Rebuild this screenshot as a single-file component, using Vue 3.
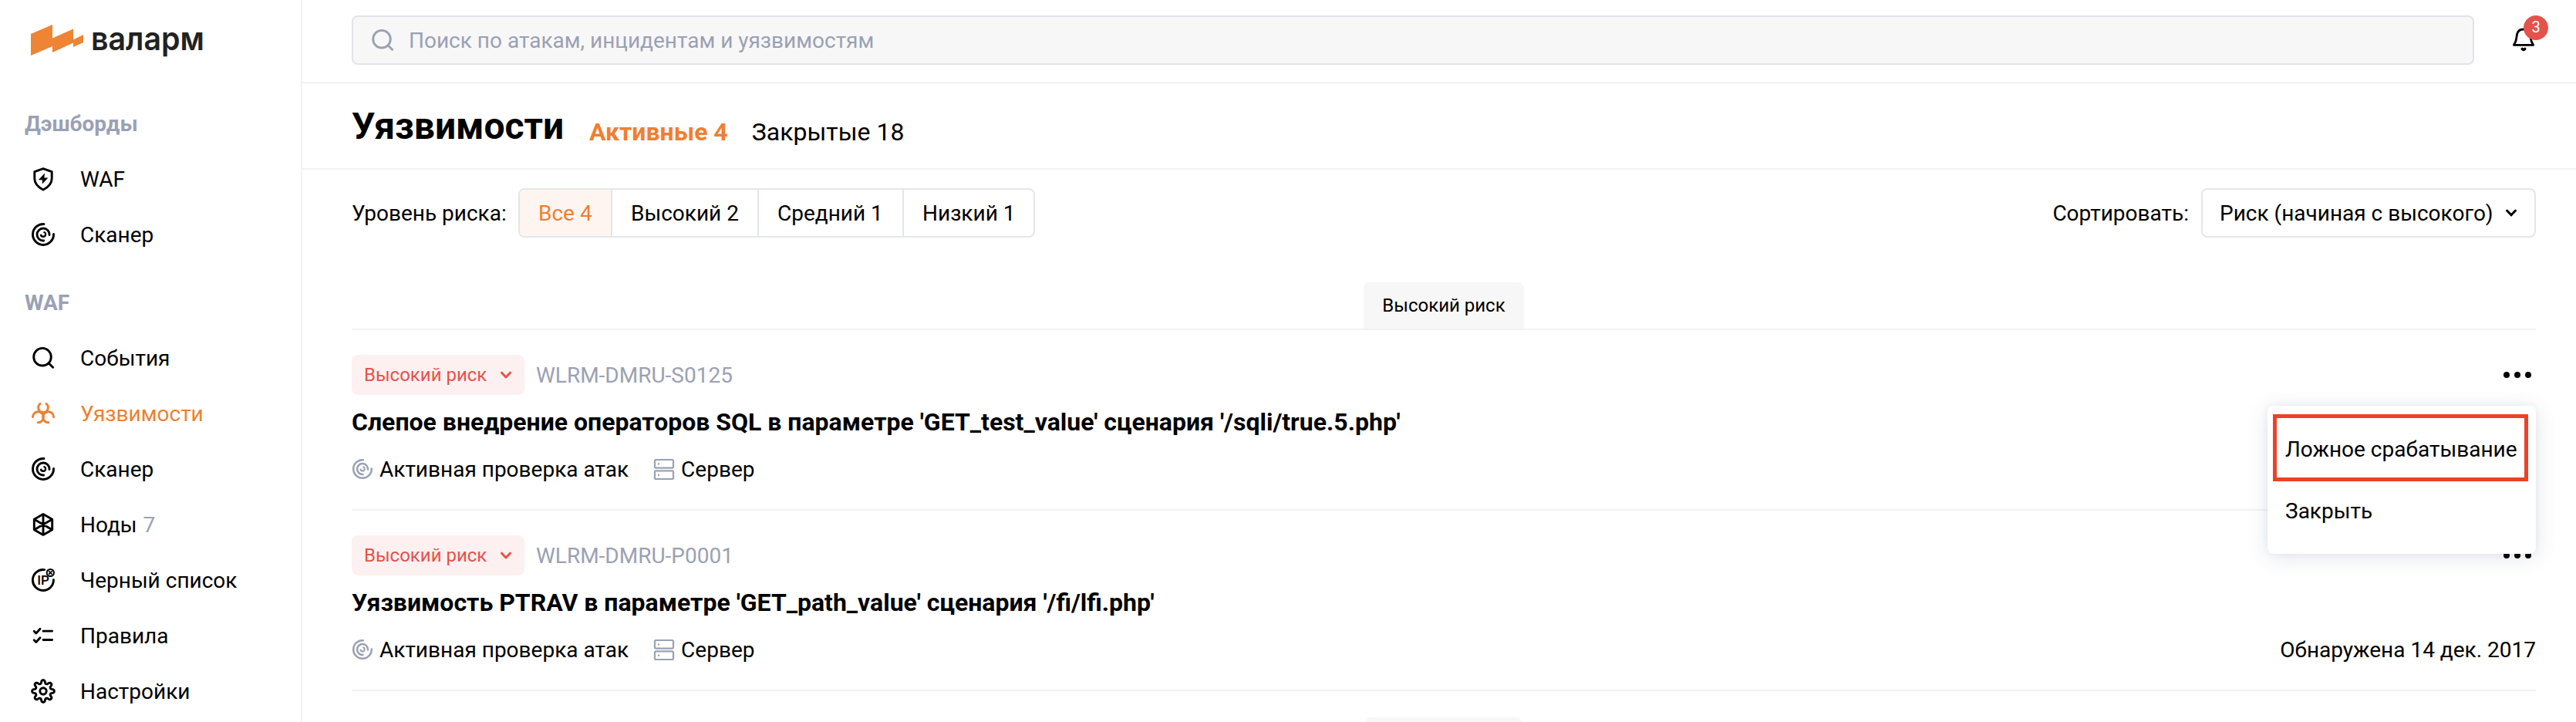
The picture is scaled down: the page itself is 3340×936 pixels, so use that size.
<script setup>
import { h } from 'vue'

const gearPath = (() => {
  const pts = []
  for (let i = 0; i < 160; i++) {
    const a = (i / 160) * Math.PI * 2
    const r = 12.2 + (2.1 * Math.tanh(1.6 * Math.cos(8 * a))) / Math.tanh(1.6)
    pts.push(`${(16 + r * Math.sin(a)).toFixed(2)} ${(16 - r * Math.cos(a)).toFixed(2)}`)
  }
  return `M${pts.join('L')}Z`
})()

const p = (d, extra = {}) => h('path', { d, ...extra })
const solid = { fill: 'currentColor', stroke: 'none' }

const shapes = {
  shield: () => [
    p('M16 2.6 27.2 6.6V15.5C27.2 22.4 22.6 26.6 16 30 9.4 26.6 4.8 22.4 4.8 15.5V6.6Z'),
    p('M18 8.6 9.8 17.2H14.8V22.4L22.4 14.4H17.4Z', solid),
  ],
  scanner: () => [
    p('M17 2.5A13.5 13.5 0 1 0 29.5 15.5'),
    p('M24 16.5A8 8 0 1 0 16.6 24'),
    p('M17 11.8A4.2 4.2 0 1 1 11.8 16L14.2 15.4A1.9 1.9 0 1 0 16 13.8Z', solid),
  ],
  search: () => [
    h('circle', { cx: 15, cy: 14.7, r: 11.3 }),
    p('M23 22.7 28.6 28.3'),
  ],
  biohazard: () => [
    p('M12 3.4A6.4 6.4 0 1 0 20 3.4'),
    p('M2.4 20.8A7 7 0 1 1 9.2 27.8'),
    p('M29.6 20.8A7 7 0 1 0 22.8 27.8'),
  ],
  nodes: () => [
    p('M16 2.6 27.7 9.2V22.8L16 29.4 4.3 22.8V9.2ZM16 3V29M4.8 9.6 27.2 22.4M27.2 9.6 4.8 22.4'),
  ],
  ip: () => [
    p('M17.6 2.6A13.5 13.5 0 1 0 29.4 15.6'),
    h('circle', { cx: 25.3, cy: 6.5, r: 4.6, 'stroke-width': 2 }),
    p('M23.6 4.8 27 8.2M27 4.8 23.6 8.2', { 'stroke-width': 1.8 }),
    h('text', { x: 8.3, y: 22.3, 'font-size': 17, 'font-weight': 500, 'font-family': 'Roboto, sans-serif', ...solid }, 'IP'),
  ],
  rules: () => [
    p('M4.2 10.3 6.8 13 12 7.2M4.2 21.8 6.8 24.5 12 18.7M16 10.2H27.6M16 21.5H27.6', { 'stroke-width': 2.8 }),
  ],
  gear: () => [p(gearPath), h('circle', { cx: 16, cy: 16, r: 4.2 })],
  server: () => [
    h('rect', { x: 4, y: 4, width: 24, height: 10.6, rx: 1.6, 'stroke-width': 2.2 }),
    h('rect', { x: 4, y: 18.4, width: 24, height: 10.6, rx: 1.6, 'stroke-width': 2.2 }),
    h('circle', { cx: 9, cy: 9.4, r: 1.2, ...solid }),
    h('circle', { cx: 9, cy: 23.8, r: 1.2, ...solid }),
  ],
}

const Icon = (props) =>
  h(
    'svg',
    {
      viewBox: '0 0 32 32',
      width: props.size || 32,
      height: props.size || 32,
      fill: 'none',
      stroke: 'currentColor',
      'stroke-width': 2.9,
      'stroke-linecap': 'round',
      'stroke-linejoin': 'round',
    },
    shapes[props.name](),
  )
Icon.props = ['name', 'size']

const sections = [
  {
    title: 'Дэшборды',
    items: [
      { icon: 'shield', label: 'WAF' },
      { icon: 'scanner', label: 'Сканер' },
    ],
  },
  {
    title: 'WAF',
    items: [
      { icon: 'search', label: 'События' },
      { icon: 'biohazard', label: 'Уязвимости', active: true },
      { icon: 'scanner', label: 'Сканер' },
      { icon: 'nodes', label: 'Ноды', count: 7 },
      { icon: 'ip', label: 'Черный список' },
      { icon: 'rules', label: 'Правила' },
      { icon: 'gear', label: 'Настройки' },
    ],
  },
]

const filters = [
  { label: 'Все 4', width: 120, active: true },
  { label: 'Высокий 2', width: 190 },
  { label: 'Средний 1', width: 188 },
  { label: 'Низкий 1', width: 168 },
]

const items = [
  {
    code: 'WLRM-DMRU-S0125',
    title: "Слепое внедрение операторов SQL в параметре 'GET_test_value' сценария '/sqli/true.5.php'",
    menu: true,
  },
  {
    code: 'WLRM-DMRU-P0001',
    title: "Уязвимость PTRAV в параметре 'GET_path_value' сценария '/fi/lfi.php'",
    date: 'Обнаружена 14 дек. 2017',
  },
]
</script>

<template>
  <div class="app">
    <aside class="sidebar">
      <div class="logo">
        <svg class="mark" width="68" height="42" viewBox="0 0 68 42">
          <path d="M0 14 28 2V19.500L55 7.500V21.500L68 15V25L55 31V25.500L28 38V30L0 42Z" fill="#ee8434" />
        </svg>
        <svg class="word" width="150" height="60" viewBox="0 0 150 60">
          <text class="logo-text" x="0" y="43" textLength="147" lengthAdjust="spacingAndGlyphs">валарм</text>
        </svg>
      </div>
      <nav v-for="s in sections" :key="s.title" class="nav">
        <div class="nav-title">{{ s.title }}</div>
        <div v-for="i in s.items" :key="i.label" class="nav-item" :class="{ active: i.active }">
          <Icon :name="i.icon" />
          <span class="nav-label">{{ i.label }}<span v-if="i.count" class="count">{{ i.count }}</span></span>
        </div>
      </nav>
    </aside>

    <main class="main">
      <header class="topbar">
        <div class="search">
          <Icon name="search" />
          <span class="placeholder">Поиск по атакам, инцидентам и уязвимостям</span>
        </div>
        <div class="bell">
          <svg width="32" height="36" viewBox="0 0 32 36" fill="none" stroke="#000" stroke-width="2.8" stroke-linejoin="round" stroke-linecap="round">
            <path d="M3.4 26.4H28.6C24.6 21 25.4 17.5 24.6 13 23.8 8.4 20.6 6 16 6S8.2 8.4 7.4 13C6.6 17.5 7.4 21 3.4 26.4Z" />
            <path d="M14.2 31.4Q16 33.6 17.8 31.4" stroke-width="3.4" />
          </svg>
          <span class="badge">3</span>
        </div>
      </header>

      <div class="heading">
        <h1>Уязвимости</h1>
        <span class="tab active">Активные 4</span>
        <span class="tab">Закрытые 18</span>
      </div>

      <div class="content">
        <div class="filters">
          <span class="filter-label">Уровень риска:</span>
          <div class="segments">
            <div
              v-for="f in filters"
              :key="f.label"
              class="segment"
              :class="{ active: f.active }"
              :style="{ width: f.width + 'px' }"
            >{{ f.label }}</div>
          </div>
          <span class="sort-label">Сортировать:</span>
          <div class="select">
            <span class="select-value">Риск (начиная с высокого)</span>
            <svg width="20" height="14" viewBox="0 0 20 14" fill="none" stroke="#000" stroke-width="3" stroke-linecap="round" stroke-linejoin="round"><path d="M4.5 4 10 9.8 15.5 4" /></svg>
          </div>
        </div>

        <div class="group"><span class="group-tab">Высокий риск</span></div>

        <article v-for="v in items" :key="v.code" class="item">
          <div class="row">
            <div class="risk">
              <span>Высокий риск</span>
              <svg width="20" height="14" viewBox="0 0 20 14" fill="none" stroke="#e5534b" stroke-width="3" stroke-linecap="round" stroke-linejoin="round"><path d="M4.5 4.2 10 10 15.5 4.2" /></svg>
            </div>
            <span class="code">{{ v.code }}</span>
            <div class="more"><i /><i /><i /></div>
          </div>
          <h2>{{ v.title }}</h2>
          <div class="meta">
            <Icon name="scanner" :size="28" class="meta-icon" />
            <span class="meta-text meta-check">Активная проверка атак</span>
            <Icon name="server" class="meta-icon" />
            <span class="meta-text meta-server">Сервер</span>
            <span class="meta-text date">{{ v.date }}</span>
          </div>
          <div v-if="v.menu" class="menu">
            <div class="menu-item marked">Ложное срабатывание</div>
            <div class="menu-item">Закрыть</div>
          </div>
        </article>

        <div class="group next"><span class="group-tab"></span></div>
      </div>
    </main>
  </div>
</template>

<style>
body {
  margin: 0;
  background: #fff;
}
</style>

<style scoped>
.app {
  display: flex;
  width: 3340px;
  height: 936px;
  overflow: hidden;
  background: #fff;
  color: #000;
  font: 400 28px/72px Roboto, sans-serif;
  white-space: nowrap;
}
svg {
  display: block;
  flex: none;
}
.sidebar {
  box-sizing: border-box;
  width: 392px;
  flex: none;
  border-right: 2px solid #f2f2f3;
}
.logo {
  box-sizing: border-box;
  display: flex;
  align-items: flex-start;
  gap: 10px;
  height: 124px;
  padding: 22px 0 0 40px;
}
.mark {
  margin-top: 8px;
}
.logo-text {
  font: 600 42px Inter, sans-serif;
  fill: #222;
}
.nav + .nav {
  margin-top: 16px;
}
.nav-title {
  height: 72px;
  padding-left: 32px;
  line-height: 74px;
  font-weight: 700;
  color: #9aa1b3;
}
.nav-item {
  display: flex;
  align-items: center;
  height: 72px;
  padding-left: 40px;
  gap: 32px;
}
.nav-label,
.placeholder,
.select-value,
.code,
.meta-text {
  padding-top: 2px;
}
.nav-item.active {
  color: #ef7f31;
}
.count {
  margin-left: 8px;
  color: #9aa1b3;
}
.main {
  flex: 1;
  min-width: 0;
}
.topbar {
  box-sizing: border-box;
  display: flex;
  height: 108px;
  padding: 20px 36px 0 64px;
  border-bottom: 2px solid #f2f2f3;
}
.search {
  box-sizing: border-box;
  display: flex;
  align-items: center;
  gap: 18px;
  width: 2752px;
  height: 64px;
  padding-left: 22px;
  border: 2px solid #e1e3e8;
  border-radius: 8px;
  background: #f7f7f7;
  color: #9aa1b3;
}
.bell {
  position: relative;
  margin-left: 48px;
  padding-top: 12px;
  width: 48px;
}
.badge {
  position: absolute;
  left: 16px;
  top: 0;
  width: 32px;
  height: 32px;
  border-radius: 50%;
  background: #e2534c;
  color: #fff;
  font-size: 20px;
  line-height: 31px;
  text-align: center;
}
.heading {
  box-sizing: border-box;
  display: flex;
  height: 112px;
  padding-left: 64px;
  border-bottom: 2px solid #f2f2f3;
}
h1 {
  width: 308px;
  margin: 28px 0 0;
  font-size: 48px;
  line-height: 56px;
  font-weight: 700;
}
.tab {
  margin: 43px 31px 0 0;
  font-size: 32px;
  line-height: 40px;
}
.tab.active {
  font-weight: 700;
  color: #ef7f31;
}
.content {
  padding: 24px 52px 0 64px;
}
.filters {
  display: flex;
  height: 64px;
  line-height: 66px;
}
.filter-label {
  width: 216px;
}
.segments {
  box-sizing: border-box;
  display: flex;
  height: 64px;
  border: 2px solid #e4e6eb;
  border-radius: 8px;
  line-height: 62px;
  overflow: hidden;
}
.segment {
  box-sizing: border-box;
  padding-left: 24px;
  border-right: 2px solid #e4e6eb;
}
.segment:last-child {
  border-right: 0;
}
.segment.active {
  background: #fef5f0;
  color: #ef7f31;
}
.sort-label {
  margin-left: auto;
  margin-right: 16px;
}
.select {
  box-sizing: border-box;
  display: flex;
  align-items: center;
  justify-content: space-between;
  width: 434px;
  height: 64px;
  padding: 0 20px 0 22px;
  border: 2px solid #e4e6eb;
  border-radius: 8px;
}
.group {
  display: flex;
  justify-content: center;
  margin-top: 58px;
  border-bottom: 2px solid #f2f2f3;
}
.group.next {
  margin-top: 34px;
}
.group-tab {
  width: 208px;
  height: 60px;
  border-radius: 8px 8px 0 0;
  background: #f7f7f7;
  font-size: 24px;
  line-height: 60px;
  text-align: center;
}
.next .group-tab {
  width: 204px;
}
.item {
  position: relative;
  box-sizing: border-box;
  height: 234px;
  padding-top: 32px;
  border-bottom: 2px solid #f2f2f3;
}
.row {
  display: flex;
  align-items: center;
  height: 52px;
  line-height: 52px;
}
.risk {
  box-sizing: border-box;
  display: flex;
  align-items: center;
  justify-content: space-between;
  width: 224px;
  height: 52px;
  padding: 0 14px 0 16px;
  border-radius: 8px;
  background: #fdf0f0;
  color: #e5534b;
  font-size: 24px;
}
.code {
  margin-left: 15px;
  color: #9aa1b3;
}
.more {
  display: flex;
  gap: 6px;
  margin-left: auto;
  margin-right: 6px;
}
.more i {
  width: 8px;
  height: 8px;
  border-radius: 50%;
  background: #000;
}
h2 {
  margin: 15px 0 0;
  font-size: 32px;
  line-height: 40px;
  font-weight: 700;
}
.meta {
  display: flex;
  align-items: center;
  height: 40px;
  margin-top: 21px;
  line-height: 40px;
}
.meta-icon {
  color: #9aa1b3;
}
.meta-check {
  margin: 0 30px 0 8px;
}
.meta-server {
  margin-left: 6px;
}
.date {
  margin-left: auto;
}
.menu {
  position: absolute;
  z-index: 2;
  right: 0;
  top: 98px;
  box-sizing: border-box;
  width: 348px;
  height: 192px;
  padding: 16px 0;
  border-radius: 8px;
  background: #fff;
  box-shadow: 0 4px 28px rgba(60, 70, 100, 0.14), 0 0 8px rgba(60, 70, 100, 0.06);
}
.menu-item {
  position: relative;
  height: 80px;
  padding-left: 23px;
  line-height: 82px;
}
.marked::after {
  content: '';
  position: absolute;
  left: 7px;
  top: -5px;
  width: 321px;
  height: 77px;
  border: 5px solid #ee4128;
}
</style>
